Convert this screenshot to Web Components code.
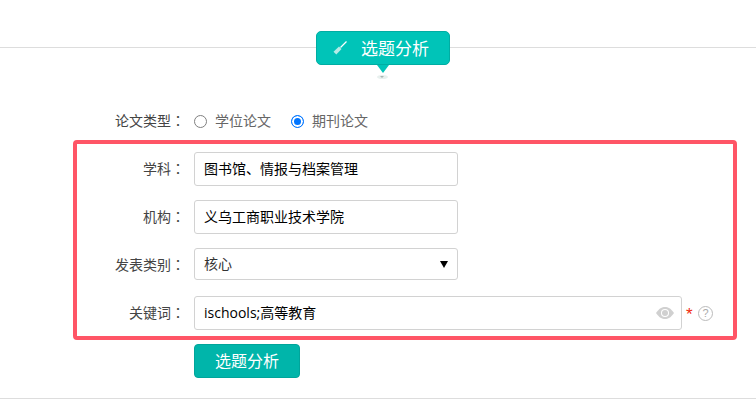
<!DOCTYPE html>
<html lang="zh">
<head>
<meta charset="utf-8">
<style>
  html, body { margin: 0; background: #fff; }
  body { font: 14px "Liberation Sans", "Noto Sans CJK SC", sans-serif; color: #333; }
</style>
</head>
<body>
<analysis-form></analysis-form>
<script>
class SectionBadge extends HTMLElement {
  constructor() {
    super();
    this.attachShadow({ mode: 'open' });
    this.shadowRoot.innerHTML = `
      <style>
        :host { display: block; position: relative; width: 134px; height: 34px; }
        .pill {
          box-sizing: border-box; height: 34px; display: flex; align-items: center;
          padding-left: 16px; gap: 14px;
          background: #00c4b8; border: 1px solid #00ada3; border-radius: 5px;
          color: #fff; font-size: 17px;
        }
        .pill span { padding-bottom: 2px; }
        svg { display: block; }
        .tip {
          position: absolute; left: 61px; top: 34px; width: 0; height: 0;
          border: 6px solid transparent; border-top: 8px solid #00c4b8; border-bottom: 0;
        }
        .shade {
          position: absolute; left: 61px; top: 44px; width: 11px; height: 4px;
          border-radius: 50%; background: #e8f0ee;
        }
        .shade::after {
          content: ""; position: absolute; left: 3px; top: 1px; width: 0; height: 0;
          border: 2.500px solid transparent; border-top: 2px solid #a9b4b2; border-bottom: 0;
        }
      </style>
      <div class="pill">
        <svg width="14" height="14" viewBox="0 0 14 14">
          <path d="M7.500 6.500 13.500 .5" stroke="#fff" stroke-width="1.200" fill="none"/>
          <path d="M6 5.500 8.500 8 3.300 13.500 .5 10.700z" fill="#b4ebe6"/>
        </svg>
        <span><slot></slot></span>
      </div>
      <div class="tip"></div>
      <div class="shade"></div>
    `;
  }
}
customElements.define('section-badge', SectionBadge);

class FormRow extends HTMLElement {
  constructor() {
    super();
    this.attachShadow({ mode: 'open' });
    this.shadowRoot.innerHTML = `
      <style>
        :host { display: flex; align-items: center; }
        .label {
          width: 108px; margin-right: 9px; flex: none; text-align: right; padding-bottom: 2px;
          font-size: 14px; color: #444; white-space: nowrap;
        }
        .colon { font-family: "Noto Sans CJK TC", sans-serif; }
      </style>
      <div class="label"><span class="name"></span><span class="colon" lang="zh-TW">：</span></div>
      <slot></slot>
    `;
    this.shadowRoot.querySelector('.name').textContent = this.getAttribute('label');
  }
}
customElements.define('form-row', FormRow);

class TextBox extends HTMLElement {
  constructor() {
    super();
    this.attachShadow({ mode: 'open' });
    this.shadowRoot.innerHTML = `
      <style>
        :host {
          display: flex; align-items: center; box-sizing: border-box; height: 34px; width: 264px;
          padding: 0 9px; border: 1px solid #d2d2d2; border-radius: 3px; background: #fff;
          font: 14px "Open Sans", "Noto Sans CJK SC", sans-serif; color: #000;
        }
        :host([wide]) { width: 488px; }
        :host([select]) { height: 32px; color: #333; margin-bottom: 2px; }
        .text { flex: 1; white-space: nowrap; padding-bottom: 2px; }
        .arrow { width: 0; height: 0; border: 4.500px solid transparent; border-top: 7px solid #000; border-bottom: 0; }
        :host(:not([select])) .arrow { display: none; }
      </style>
      <span class="text"><slot></slot></span>
      <div class="arrow"></div>
      <slot name="end"></slot>
    `;
  }
}
customElements.define('text-box', TextBox);

class RadioOption extends HTMLElement {
  constructor() {
    super();
    this.attachShadow({ mode: 'open' });
    this.shadowRoot.innerHTML = `
      <style>
        :host { display: inline-flex; align-items: center; gap: 8px; font-size: 14px; color: #666; }
        .dot {
          box-sizing: border-box; width: 13px; height: 13px; border-radius: 50%;
          border: 1px solid #808080; background: #fff;
        }
        :host([checked]) .dot { border: 1px solid #0075ff; box-shadow: inset 0 0 0 2px #fff; background: #0075ff; }
        .text { padding-bottom: 2px; }
      </style>
      <span class="dot"></span>
      <span class="text"><slot></slot></span>
    `;
  }
}
customElements.define('radio-option', RadioOption);

class AnalysisForm extends HTMLElement {
  constructor() {
    super();
    this.attachShadow({ mode: 'open' });
    this.shadowRoot.innerHTML = `
      <style>
        :host { display: block; width: 756px; height: 406px; box-sizing: border-box; padding-top: 47px; }
        .panel { border-top: 1px solid #ddd; border-bottom: 1px solid #ddd; height: 352px; box-sizing: border-box; }
        .head { display: flex; padding-left: 316px; margin-top: -17px; height: 80px; }
        .type-row { margin-left: 77px; height: 20px; margin-bottom: 9px; }
        .opts { display: flex; gap: 20px; }
        .outline {
          box-sizing: border-box; width: 664px; height: 200px; margin-left: 73px;
          border: 4px solid #ff5566; border-radius: 4px; padding: 8px 0 0;
          display: flex; flex-direction: column; gap: 14px;
        }
        .eye { display: block; margin-right: -2px; }
        .mark { color: #f02a10; margin-left: 4px; width: 9px; font-size: 17px; line-height: 1; height: 14px; }
        .help {
          box-sizing: border-box; width: 15px; height: 15px; border: 1px solid #bbb; border-radius: 50%;
          margin-left: 3px; color: #aaa; font-size: 11px; line-height: 13px; text-align: center;
        }
        .submit {
          box-sizing: border-box; display: block; width: 106px; height: 34px; margin: 4px 0 0 194px;
          background: #00b5aa; border: 1px solid #00a59b; border-radius: 4px;
          color: #fff; font: 16px "Liberation Sans", "Noto Sans CJK SC", sans-serif; padding: 0 0 2px;
        }
      </style>
      <div class="panel">
        <div class="head"><section-badge>选题分析</section-badge></div>
        <form-row class="type-row" label="论文类型">
          <div class="opts"><radio-option>学位论文</radio-option><radio-option checked>期刊论文</radio-option></div>
        </form-row>
        <div class="outline">
          <form-row label="学科"><text-box>图书馆、情报与档案管理</text-box></form-row>
          <form-row label="机构"><text-box>义乌工商职业技术学院</text-box></form-row>
          <form-row label="发表类别"><text-box select>核心</text-box></form-row>
          <form-row label="关键词">
            <text-box wide>ischools;高等教育
              <svg slot="end" class="eye" width="18" height="12" viewBox="0 0 18 12">
                <path d="M0 6C3 1.500 6 0 9 0s6 1.500 9 6c-3 4.500-6 6-9 6S3 10.500 0 6z" fill="#d0d0d0"/>
                <circle cx="9" cy="6" r="4" fill="#fff"/><circle cx="9" cy="6" r="3" fill="#d0d0d0"/>
              </svg>
            </text-box>
            <span class="mark">*</span><span class="help">?</span>
          </form-row>
        </div>
        <button class="submit">选题分析</button>
      </div>
    `;
  }
}
customElements.define('analysis-form', AnalysisForm);
</script>
</body>
</html>
